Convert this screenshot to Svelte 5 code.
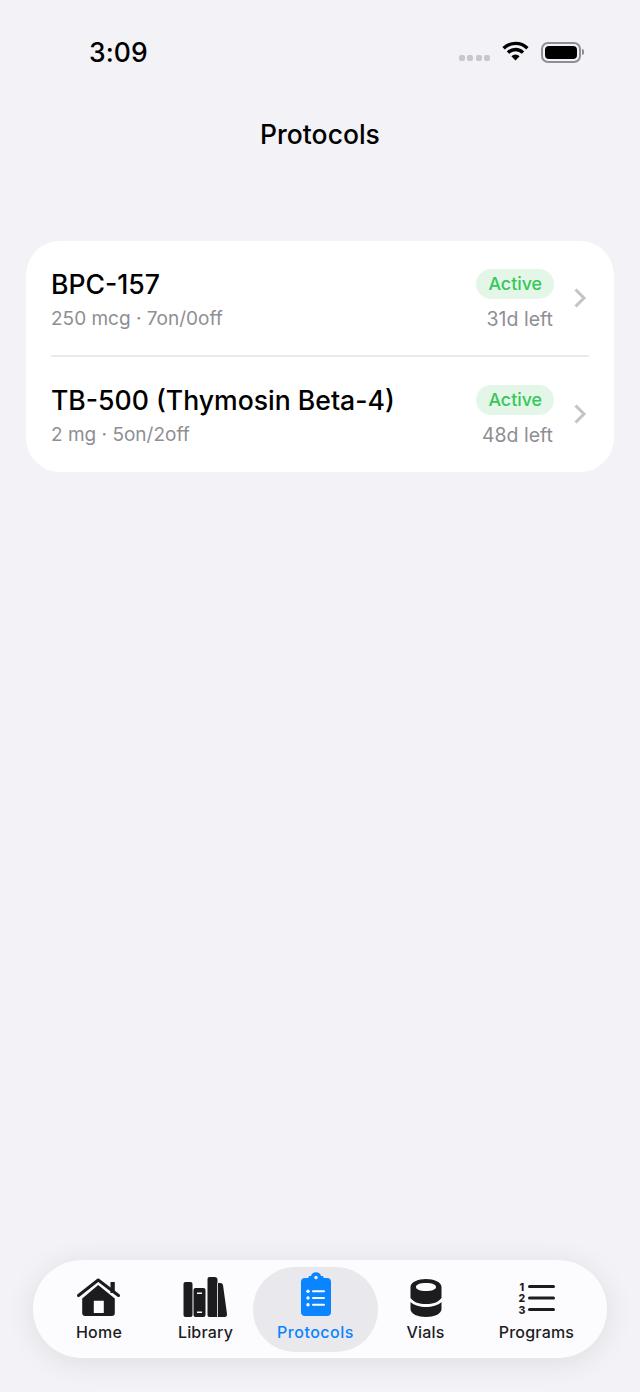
<script lang="ts">
  type Protocol = {
    name: string;
    detail: string;
    left: string;
  };

  const protocols: Protocol[] = [
    { name: "BPC-157", detail: "250 mcg · 7on/0off", left: "31d left" },
    { name: "TB-500 (Thymosin Beta-4)", detail: "2 mg · 5on/2off", left: "48d left" },
  ];
</script>

<div class="page">
  <div class="status">
    <span class="time">3:09</span>
    <div class="status-icons">
      <div class="dots"><i></i><i></i><i></i><i></i></div>
      <svg class="wifi" width="27" height="21" viewBox="0 0 27 21">
        <path d="M1.6 8.200 A17 17 0 0 1 25.400 8.200" fill="none" stroke="#000" stroke-width="3.400" />
        <path d="M6 12.600 A10.600 10.600 0 0 1 21 12.600" fill="none" stroke="#000" stroke-width="3.400" />
        <path d="M9.400 16.200 A5.800 5.800 0 0 1 17.600 16.200 L13.500 20.500 Z" fill="#000" />
      </svg>
      <div class="battery"><div class="battery-fill"></div></div>
      <div class="battery-cap"></div>
    </div>
  </div>

  <h1>Protocols</h1>

  <div class="card">
    {#each protocols as p, i}
      {#if i > 0}<div class="sep"></div>{/if}
      <div class="row">
        <div class="info">
          <div class="name">{p.name}</div>
          <div class="detail">{p.detail}</div>
        </div>
        <div class="meta">
          <span class="badge">Active</span>
          <span class="left">{p.left}</span>
        </div>
        <svg class="chevron" width="14" height="22" viewBox="0 0 14 22">
          <path d="M2.500 2.500 L11 11 L2.500 19.500" fill="none" stroke="#c4c4c7" stroke-width="3" />
        </svg>
      </div>
    {/each}
  </div>

  <nav class="tabbar">
    <div class="tab home">
      <svg width="44" height="40" viewBox="0 0 44 40">
        <path d="M1.500 18.500 L21.200 3 L41.500 18.500" fill="none" stroke="#1c1c1e" stroke-width="3" stroke-linecap="round" stroke-linejoin="round" />
        <path d="M33.500 5 H37.800 V16 H33.500 Z" fill="#1c1c1e" />
        <path fill-rule="evenodd" d="M21.200 8 L37.800 21.500 V36 Q37.800 39 34.800 39 H8.200 Q5.200 39 5.200 36 V21.500 Z M16.800 23.700 V36 H26.800 V23.700 Z" fill="#1c1c1e" />
      </svg>
      <span>Home</span>
    </div>
    <div class="tab library">
      <svg width="45" height="40" viewBox="0 0 45 40">
        <rect x="0.500" y="5" width="9" height="35" rx="2" fill="#1c1c1e" />
        <path fill-rule="evenodd" d="M12.500 11 H20.500 Q22.500 11 22.500 13 V38 Q22.500 40 20.500 40 H12.500 Q10.500 40 10.500 38 V13 Q10.500 11 12.500 11 Z M14 15.500 V17 H19 V15.500 Z M14 34.500 V36 H19 V34.500 Z" fill="#1c1c1e" />
        <path d="M26.500 0 H31.500 Q34.500 0 34.500 3 V6 H37.500 Q39.500 6 40 8 L44 37 Q44.300 40 41.500 40 H26.500 Q24.500 40 24.500 38 V2 Q24.500 0 26.500 0 Z" fill="#1c1c1e" />
        <path d="M34.500 6 V40" stroke="#fcfcfe" stroke-width="0.800" />
      </svg>
      <span>Library</span>
    </div>
    <div class="tab active">
      <svg width="32" height="44" viewBox="0 0 32 44">
        <path fill-rule="evenodd" d="M5 5 H8.500 V4 Q8.500 3 10 3 H11 A5.200 5.200 0 0 1 21 3 H22 Q23.500 3 23.500 4 V5 H27 Q31 5 31 9 V39 Q31 43 27 43 H5 Q1 43 1 39 V9 Q1 5 5 5 Z M16 2.800 A1.800 1.800 0 1 0 16 6.400 A1.800 1.800 0 1 0 16 2.800 Z" fill="#0a84ff" />
        <g fill="#fff">
          <circle cx="8" cy="18.300" r="1.700" />
          <circle cx="8" cy="25" r="1.700" />
          <circle cx="8" cy="31.700" r="1.700" />
          <rect x="12" y="17.300" width="13" height="2" rx="1" />
          <rect x="12" y="24" width="13" height="2" rx="1" />
          <rect x="12" y="30.700" width="13" height="2" rx="1" />
        </g>
      </svg>
      <span>Protocols</span>
    </div>
    <div class="tab vials">
      <svg width="32" height="38" viewBox="0 0 32 38">
        <path fill-rule="evenodd" d="M0.500 8 C0.500 3 8 0 16 0 C24 0 31.500 3 31.500 8 V19 C28 23.500 23 25 16 25 C9 25 4 23.500 0.500 19 Z M16 4 C10 4 6 5.500 6 8 C6 10.500 10 12 16 12 C22 12 26 10.500 26 8 C26 5.500 22 4 16 4 Z" fill="#1c1c1e" />
        <path d="M0.500 23 C4 26.500 10 28 16 28 C22 28 28 26.500 31.500 23 V30 C31.500 35 24 38 16 38 C8 38 0.500 35 0.500 30 Z" fill="#1c1c1e" />
      </svg>
      <span>Vials</span>
    </div>
    <div class="tab programs">
      <svg width="37" height="34" viewBox="0 0 37 34">
        <g fill="#1c1c1e" font-family="Inter, sans-serif" font-weight="800" font-size="10.500" text-anchor="middle">
          <text x="4" y="8.500">1</text>
          <text x="4" y="20">2</text>
          <text x="4" y="31.500">3</text>
        </g>
        <rect x="10" y="3" width="27" height="3" rx="1.500" fill="#1c1c1e" />
        <rect x="10" y="14.500" width="27" height="3" rx="1.500" fill="#1c1c1e" />
        <rect x="10" y="26" width="27" height="3" rx="1.500" fill="#1c1c1e" />
      </svg>
      <span>Programs</span>
    </div>
  </nav>
</div>

<style>
  :global(body) {
    margin: 0;
    background: #f2f2f7;
  }

  .page {
    position: relative;
    height: 1392px;
    box-sizing: border-box;
    display: flex;
    flex-direction: column;
    padding: 0 26px;
    font-family: Inter, "Liberation Sans", sans-serif;
    color: #000;
    overflow: hidden;
  }

  .status {
    display: flex;
    align-items: center;
    justify-content: space-between;
    height: 32px;
    margin-top: 36px;
    padding: 0 30px 0 63px;
  }

  .time {
    font-size: 26.500px;
    font-weight: 500;
    letter-spacing: 0.100px;
  }

  .status-icons {
    display: flex;
    align-items: center;
  }

  .dots {
    display: flex;
    gap: 2.300px;
    margin: 12px 12px 0 0;
  }

  .dots i {
    width: 6px;
    height: 6px;
    border-radius: 2px;
    background: #c7c7cc;
  }

  .wifi {
    margin: -4px 12px 0 0;
  }

  .battery {
    box-sizing: border-box;
    width: 40px;
    height: 21px;
    padding: 2px;
    border: 2px solid #8e8e93;
    border-radius: 7px;
  }

  .battery-fill {
    height: 100%;
    background: #000;
    border-radius: 4px;
  }

  .battery-cap {
    width: 2px;
    height: 6px;
    margin-left: 1px;
    background: #8e8e93;
    border-radius: 0 2px 2px 0;
  }

  h1 {
    margin: 49px 0 0;
    font-size: 26.500px;
    line-height: 34px;
    font-weight: 500;
    text-align: center;
  }

  .card {
    margin-top: 90px;
    background: #fff;
    border-radius: 34px;
    padding: 0 25px 1px;
  }

  .sep {
    height: 2px;
    background: #e9e9eb;
  }

  .row {
    display: flex;
    align-items: center;
    height: 114px;
  }

  .info {
    flex: 1;
    padding-top: 3px;
  }

  .name {
    font-size: 26.600px;
    line-height: 32px;
    font-weight: 500;
  }

  .detail {
    margin-top: 6px;
    font-size: 19px;
    line-height: 26px;
    color: #8e8e93;
  }

  .meta {
    display: flex;
    flex-direction: column;
    align-items: flex-end;
    gap: 7px;
    padding-top: 4px;
  }

  .badge {
    padding: 0 12px;
    height: 30px;
    line-height: 30px;
    border-radius: 15px;
    background: #e4f6e8;
    color: #34c759;
    font-size: 17.800px;
    font-weight: 500;
  }

  .left {
    margin-right: 1px;
    font-size: 19.500px;
    line-height: 26px;
    color: #8e8e93;
  }

  .chevron {
    margin-left: 19px;
    margin-right: 2px;
  }

  .tabbar {
    position: absolute;
    left: 33px;
    top: 1260px;
    width: 574px;
    height: 98px;
    box-sizing: border-box;
    padding: 7px 0 6px;
    display: flex;
    align-items: stretch;
    background: #fcfcfe;
    border-radius: 49px;
    box-shadow: 0 4px 30px rgba(0, 0, 0, 0.09);
  }

  .tab {
    display: flex;
    flex-direction: column;
    align-items: center;
    justify-content: flex-end;
    padding-bottom: 10px;
    box-sizing: border-box;
    gap: 5px;
    color: #1c1c1e;
    font-size: 16px;
    font-weight: 500;
    letter-spacing: 0.200px;
  }

  .tab svg {
    overflow: visible;
  }

  .tab span {
    line-height: 20px;
  }

  .home { width: 132px; }
  .library {
    width: 88px;
    padding-right: 7px;
  }
  .active {
    width: 125px;
    color: #0a84ff;
    background: #e8e8ed;
    border-radius: 42px;
    letter-spacing: 0.500px;
  }
  .vials { width: 95px; }
  .programs { width: 127px; }
  .programs svg { margin-bottom: 1px; }
</style>
